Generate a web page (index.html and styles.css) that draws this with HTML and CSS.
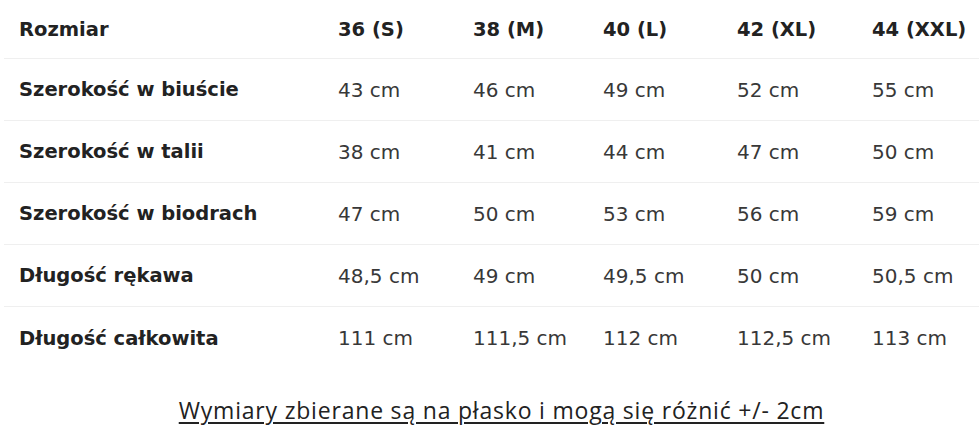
FILE: index.html
```html
<!DOCTYPE html>
<html lang="pl">
<head>
<meta charset="utf-8">
<link rel="stylesheet" href="styles.css">
</head>
<body>
<div class="sizes">
  <div class="row head">
    <div class="cell label">Rozmiar</div>
    <div class="cell">36 (S)</div>
    <div class="cell">38 (M)</div>
    <div class="cell">40 (L)</div>
    <div class="cell">42 (XL)</div>
    <div class="cell">44 (XXL)</div>
  </div>
  <div class="row">
    <div class="cell label">Szerokość w biuście</div>
    <div class="cell">43 cm</div>
    <div class="cell">46 cm</div>
    <div class="cell">49 cm</div>
    <div class="cell">52 cm</div>
    <div class="cell">55 cm</div>
  </div>
  <div class="row">
    <div class="cell label">Szerokość w talii</div>
    <div class="cell">38 cm</div>
    <div class="cell">41 cm</div>
    <div class="cell">44 cm</div>
    <div class="cell">47 cm</div>
    <div class="cell">50 cm</div>
  </div>
  <div class="row">
    <div class="cell label">Szerokość w biodrach</div>
    <div class="cell">47 cm</div>
    <div class="cell">50 cm</div>
    <div class="cell">53 cm</div>
    <div class="cell">56 cm</div>
    <div class="cell">59 cm</div>
  </div>
  <div class="row">
    <div class="cell label">Długość rękawa</div>
    <div class="cell">48,5 cm</div>
    <div class="cell">49 cm</div>
    <div class="cell">49,5 cm</div>
    <div class="cell">50 cm</div>
    <div class="cell">50,5 cm</div>
  </div>
  <div class="row last">
    <div class="cell label">Długość całkowita</div>
    <div class="cell">111 cm</div>
    <div class="cell">111,5 cm</div>
    <div class="cell">112 cm</div>
    <div class="cell">112,5 cm</div>
    <div class="cell">113 cm</div>
  </div>
</div>
<p class="note">Wymiary zbierane są na płasko i mogą się różnić +/- 2cm</p>
</body>
</html>
```

FILE: styles.css
```css
html, body {
  margin: 0;
  padding: 0;
  background: #ffffff;
}

body {
  width: 979px;
  height: 447px;
  overflow: hidden;
  font-family: "DejaVu Sans", sans-serif;
  color: #2b2b2b;
}

.sizes {
  display: flex;
  flex-direction: column;
  padding-left: 4px;
}

.row {
  display: grid;
  grid-template-columns: 334px 135px 130px 134px 135px 1fr;
  align-items: center;
  height: 62px;
  box-sizing: border-box;
  border-bottom: 1px solid #efefef;
  font-size: 20px;
  color: #383838;
}

.row.head {
  height: 59px;
  font-weight: bold;
  font-size: 19.5px;
  color: #222222;
}

.row.last {
  border-bottom: none;
}

.cell {
  white-space: nowrap;
}

.label {
  padding-left: 15px;
  font-weight: bold;
  font-size: 19.5px;
  color: #222222;
}

.note {
  margin: 26px 0 0 0;
  padding-left: 24px;
  text-align: center;
  font-family: "Open Sans", sans-serif;
  font-weight: 500;
  font-size: 23px;
  letter-spacing: 0.8px;
  line-height: 30px;
  color: #222222;
  text-decoration: underline;
  text-decoration-thickness: 2px;
  text-underline-offset: 3px;
}
```
